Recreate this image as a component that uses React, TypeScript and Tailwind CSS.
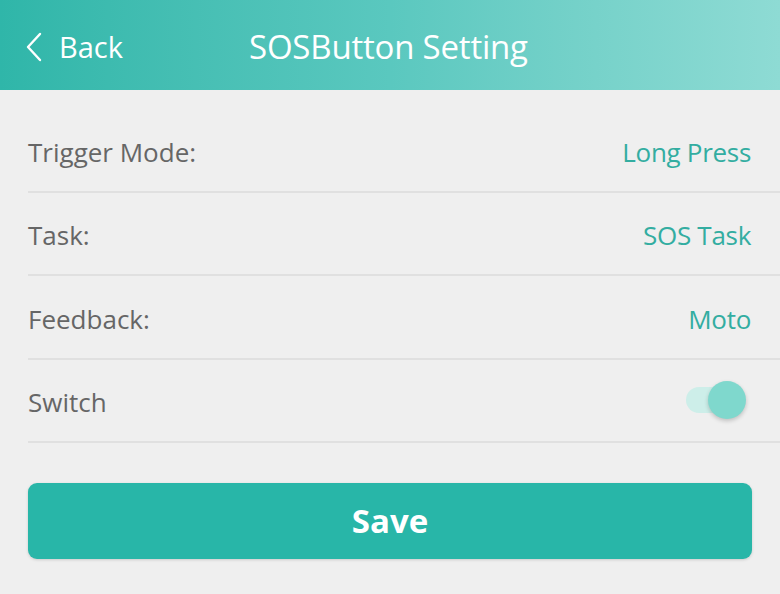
const rows = [
  { label: "Trigger Mode:", value: "Long Press" },
  { label: "Task:", value: "SOS Task" },
  { label: "Feedback:", value: "Moto" },
];

const BackIcon = () => (
  <svg width="16" height="30" viewBox="0 0 16 30" fill="none">
    <path d="M14 2 L2 15 L14 28" stroke="white" strokeWidth="2.4" strokeLinecap="round" strokeLinejoin="round" />
  </svg>
);

const App = () => {
  return (
    <div
      className="w-[780px] h-[594px] bg-[#efefef] overflow-hidden"
      style={{ fontFamily: '"Open Sans", "Noto Sans", sans-serif' }}
    >
      {/* header */}
      <div className="h-[90px] pt-[3px] flex items-center bg-gradient-to-r from-[#2fb6a9] via-[#5ac8bf] to-[#8edbd4] text-white">
        <div className="flex items-center pl-[26px] w-[249px]">
          <BackIcon />
          <span className="ml-[17px] text-[29px]">Back</span>
        </div>
        <span className="text-[33px] tracking-[-0.2px]">SOSButton Setting</span>
      </div>

      {/* settings list */}
      <div className="mt-[19px] pl-[28px]">
        {rows.map((r) => (
          <div
            key={r.label}
            className="h-[83.5px] pt-[5px] flex items-center justify-between pr-[29px] border-b-2 border-[#e0e0e0] text-[26px]"
          >
            <span className="text-[#666666]">{r.label}</span>
            <span className="text-[#33ada1] tracking-[-0.3px]">{r.value}</span>
          </div>
        ))}
        <div className="h-[83.5px] pt-[5px] flex items-center justify-between pr-[34px] border-b-2 border-[#e0e0e0] text-[26px]">
          <span className="text-[#666666]">Switch</span>
          <div className="relative w-[60px] h-[38px] -mt-[5px] flex items-center">
            <div className="w-[44px] h-[26px] rounded-full bg-[#cdeee9]" />
            <div className="absolute right-0 top-0 w-[38px] h-[38px] rounded-full bg-[#7fd8cd] shadow-[0_2px_4px_rgba(0,0,0,0.2)]" />
          </div>
        </div>
      </div>

      {/* save */}
      <div className="px-[28px] mt-[40px]">
        <button className="w-full h-[76px] rounded-[9px] bg-[#28b6a8] text-white text-[33px] font-bold shadow-[0_1px_3px_rgba(0,0,0,0.15)]">
          Save
        </button>
      </div>
    </div>
  );
};

export default App;
